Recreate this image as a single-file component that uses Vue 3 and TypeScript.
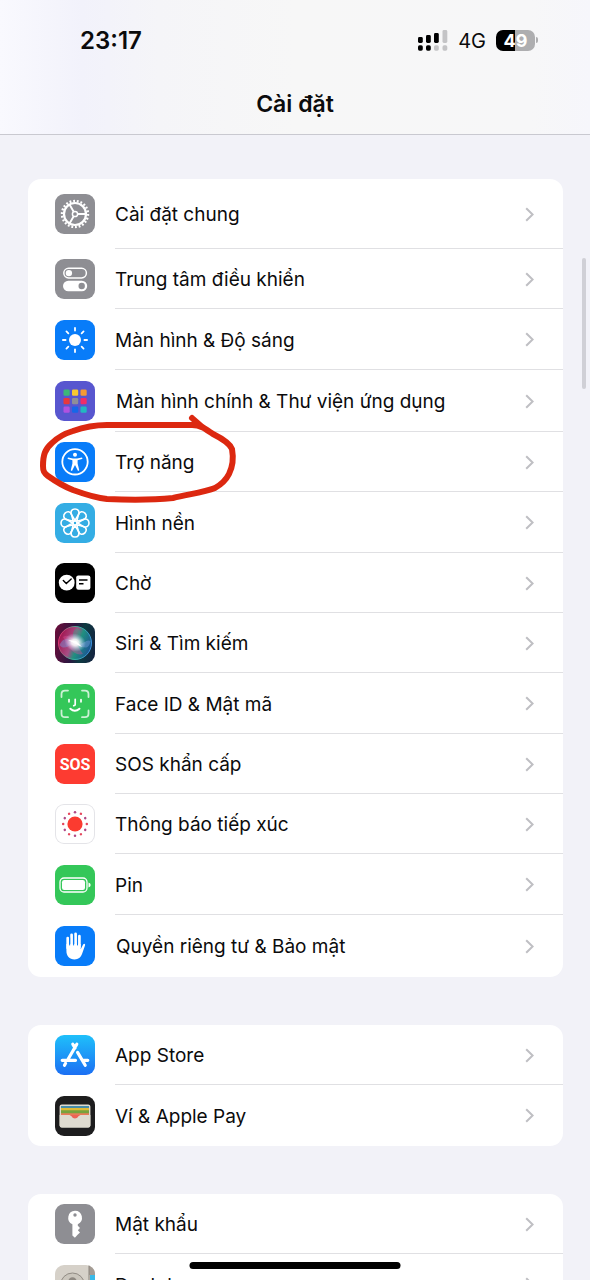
<script setup lang="ts">
interface Row {
  id: string
  label: string
  size?: 'tall' | 'roomy'
  marked?: boolean
}

const groups: Row[][] = [
  [
    { id: 'general', label: 'Cài đặt chung', size: 'tall' },
    { id: 'control', label: 'Trung tâm điều khiển' },
    { id: 'display', label: 'Màn hình & Độ sáng' },
    { id: 'home', label: 'Màn hình chính & Thư viện ứng dụng', size: 'roomy' },
    { id: 'access', label: 'Trợ năng', marked: true },
    { id: 'wallpaper', label: 'Hình nền' },
    { id: 'standby', label: 'Chờ' },
    { id: 'siri', label: 'Siri & Tìm kiếm' },
    { id: 'faceid', label: 'Face ID & Mật mã' },
    { id: 'sos', label: 'SOS khẩn cấp' },
    { id: 'exposure', label: 'Thông báo tiếp xúc' },
    { id: 'battery', label: 'Pin' },
    { id: 'privacy', label: 'Quyền riêng tư & Bảo mật', size: 'roomy' },
  ],
  [
    { id: 'store', label: 'App Store' },
    { id: 'wallet', label: 'Ví & Apple Pay' },
  ],
  [
    { id: 'passwords', label: 'Mật khẩu' },
    { id: 'contacts', label: 'Danh bạ' },
  ],
]

const eighths = [0, 45, 90, 135, 180, 225, 270, 315]
const twelfths = Array.from({ length: 12 }, (_, i) => i * 30)
const tiles = [
  '#3cb878', '#f8c830', '#f59a35',
  '#e8383c', '#8e8e98', '#f02d68',
  '#b052e0', '#1667e8', '#22b8c0',
].map((color, i) => ({ color, x: 8.5 + (i % 3) * 8.5, y: 8.5 + Math.floor(i / 3) * 8.5 }))
</script>

<template>
  <div class="screen">
    <header class="top">
      <div class="status">
        <time class="clock">23:17</time>
        <div class="indicators">
          <svg class="signal" viewBox="0 0 30 21" aria-hidden="true">
            <rect x="0" y="7" width="4.8" height="6" rx="1.4" />
            <rect x="8" y="5" width="4.8" height="8" rx="1.4" />
            <rect x="16" y="3" width="4.8" height="10" rx="1.4" />
            <rect x="24.5" y="0" width="4.8" height="13" rx="1.4" fill="#c4c4c6" />
            <rect x="0" y="15.3" width="4.8" height="5.4" rx="1.6" />
            <rect x="8" y="15.3" width="4.8" height="5.4" rx="1.6" />
            <rect x="16" y="15.3" width="4.8" height="5.4" rx="1.6" fill="#c4c4c6" />
            <rect x="24.5" y="15.3" width="4.8" height="5.4" rx="1.6" fill="#c4c4c6" />
          </svg>
          <span class="network">4G</span>
          <span class="charge"><span class="level">49</span></span>
        </div>
      </div>
      <h1>Cài đặt</h1>
    </header>

    <main class="content">
      <ul v-for="(group, g) in groups" :key="g" class="card">
        <li v-for="row in group" :key="row.id" class="item" :class="row.size">
          <a class="row" :href="'#' + row.id">
            <svg class="icon" :class="row.id" viewBox="0 0 40 40" aria-hidden="true">
              <g v-if="row.id === 'general'" fill="none" stroke="#fff">
                <circle cx="20" cy="20" r="11" stroke-width="2.2" />
                <circle cx="20" cy="20" r="13" stroke-width="2.4" pathLength="44" stroke-dasharray="1 1" />
                <circle cx="20" cy="20" r="2.6" stroke-width="1.5" />
                <path d="M22.6 20H31M18.7 17.7L14.5 10.5M18.7 22.3L14.5 29.5" stroke-width="1.9" />
              </g>
              <g v-else-if="row.id === 'control'">
                <rect x="8.8" y="9.3" width="22.6" height="9.6" rx="4.8" fill="none" stroke="#fff" stroke-width="1.5" />
                <circle cx="13.9" cy="14.1" r="3.2" fill="#fff" />
                <rect x="8" y="21.7" width="24.2" height="10.6" rx="5.3" fill="#fff" />
                <circle cx="26.7" cy="27" r="3.2" fill="#8e8e93" />
              </g>
              <g v-else-if="row.id === 'display'" stroke="#fff" stroke-width="1.8" stroke-linecap="round">
                <circle cx="20" cy="20" r="6" fill="#fff" stroke="none" />
                <path v-for="a in eighths" :key="a" d="M20 10.6V7.9" :transform="`rotate(${a} 20 20)`" />
              </g>
              <g v-else-if="row.id === 'home'">
                <rect v-for="t in tiles" :key="t.color" :x="t.x" :y="t.y" width="6.2" height="6.2" rx="1.3" :fill="t.color" />
              </g>
              <g v-else-if="row.id === 'access'">
                <circle cx="20" cy="19.8" r="12.7" fill="none" stroke="#fff" stroke-width="1.8" />
                <circle cx="20" cy="12.7" r="2" fill="#fff" />
                <path d="M13 15.6L18 16.4H22L27 15.6Q28 16.6 27 17.1L22.6 18.2V21.5L24.2 28Q24 29.2 22.9 28.7L20 23L17.1 28.7Q16 29.2 15.8 28L17.4 21.5V18.2L13 17.1Q12 16.6 13 15.6Z" fill="#fff" />
              </g>
              <g v-else-if="row.id === 'wallpaper'" fill="none" stroke="#fff" stroke-width="1.6" stroke-linejoin="round">
                <path v-for="a in eighths" :key="a" d="M20 17.5L16.8 12.2C14.6 8 17.4 6 20 6S25.4 8 23.2 12.2Z" :transform="`rotate(${a} 20 20)`" />
                <circle cx="20" cy="20" r="2" />
              </g>
              <g v-else-if="row.id === 'standby'">
                <circle cx="11.7" cy="19.7" r="7.9" fill="#fff" />
                <path d="M8.3 17.5L11.3 20.6L16.2 16" fill="none" stroke="#000" stroke-width="1.4" stroke-linecap="round" />
                <rect x="21.2" y="12.4" width="14.2" height="14.4" rx="2.2" fill="#fff" />
                <path d="M24 17H32.5M24 20.7H28.5" stroke="#000" stroke-width="1.5" />
              </g>
              <g v-else-if="row.id === 'siri'">
                <defs>
                  <linearGradient id="siri-ring" x1="0" y1="0.4" x2="1" y2="0.6">
                    <stop offset="0" stop-color="#e0316f" />
                    <stop offset="0.5" stop-color="#34b996" />
                    <stop offset="1" stop-color="#3c8fe0" />
                  </linearGradient>
                  <radialGradient id="siri-core">
                    <stop offset="0" stop-color="#fff" />
                    <stop offset="0.35" stop-color="#fff" stop-opacity="0.85" />
                    <stop offset="1" stop-color="#b9d4ff" stop-opacity="0" />
                  </radialGradient>
                  <linearGradient id="siri-orb" x1="0" y1="0.3" x2="1" y2="0.7">
                    <stop offset="0" stop-color="#a3124d" />
                    <stop offset="0.42" stop-color="#a84d85" />
                    <stop offset="0.6" stop-color="#21907f" />
                    <stop offset="1" stop-color="#1b4f96" />
                  </linearGradient>
                </defs>
                <circle cx="20" cy="20" r="16.5" fill="url(#siri-orb)" stroke="url(#siri-ring)" stroke-width="1" />
                <path d="M4.5 22C9 13 15 16 21 20S31 15 35.5 18C34 27 29 25 22 22S10 29 4.5 22Z" fill="#7798e0" opacity="0.45" />
                <path d="M8 14C16 9 20 19 28 31C18 34 13 22 8 14Z" fill="#dc4f99" opacity="0.4" />
                <path d="M22 5C29 9 24 15 20 20C18 15 16 8 22 5Z" fill="#26b188" opacity="0.4" />
                <ellipse cx="20" cy="19.5" rx="11" ry="9" fill="url(#siri-core)" transform="rotate(18 20 20)" />
                <path d="M13 17L27 24L21 18Z" fill="#fff" />
              </g>
              <g v-else-if="row.id === 'faceid'" fill="none" stroke="#fff" stroke-linecap="round">
                <path d="M6.5 13V10Q6.5 6.6 10 6.6H13M27 6.6H30Q33.5 6.6 33.5 10V13M33.5 26.5V29.8Q33.5 33.2 30 33.2H27M13 33.2H10Q6.5 33.2 6.5 29.8V26.5" stroke-width="1.8" opacity="0.75" />
                <path d="M14 15.5V17.8M26 15.5V17.8M20.2 15.3V20.5Q20.2 21.7 18.7 21.7" stroke-width="1.7" />
                <path d="M15.3 24.7Q19.8 28.7 24.5 24.7" stroke-width="1.9" />
              </g>
              <text v-else-if="row.id === 'sos'" class="sos-text" x="20" y="26" text-anchor="middle">SOS</text>
              <g v-else-if="row.id === 'exposure'">
                <circle cx="20" cy="20" r="7.6" fill="#fb3b30" />
                <circle v-for="a in twelfths" :key="a" cx="20" cy="8.2" r="1.25" :fill="a % 60 ? '#e5465c' : '#b04a86'" :transform="`rotate(${a} 20 20)`" />
              </g>
              <g v-else-if="row.id === 'battery'">
                <rect x="5" y="13" width="27" height="14" rx="4" fill="none" stroke="#fff" stroke-width="1.3" />
                <rect x="7" y="15" width="23" height="10" rx="2.2" fill="#fff" />
                <path d="M33.5 17.6Q35.7 18.2 35.7 20T33.5 22.4Z" fill="#fff" />
              </g>
              <g v-else-if="row.id === 'privacy'" fill="#fff">
                <path d="M12.7 12V22M16.6 8.8V20M20.6 7.8V20M24.4 10.2V21" stroke="#fff" stroke-width="2.7" stroke-linecap="round" />
                <path d="M11.4 18H25.7V23.2L28 18.7C29 17 30.6 17.6 30 19.6L27.2 27.5C25.6 31.6 23.4 33.4 19.6 33.4C14.2 33.4 11.4 30.2 11.4 24.8Z" />
                <path d="M14.65 12V19M18.6 10V19M22.5 10V19" stroke="#087cf9" stroke-width="1" stroke-linecap="round" />
              </g>
              <g v-else-if="row.id === 'store'" stroke="#fff" stroke-width="3.2" stroke-linecap="round">
                <path d="M21.8 9.2L13.2 24M10.6 28.3L9.5 30.3M17.8 9.2L20 13M22.6 17.4L30.2 30.3M7.2 25.3H20.5M28 25.3H32.8" />
              </g>
              <g v-else-if="row.id === 'wallet'">
                <rect x="4.6" y="8.6" width="30.8" height="22.8" rx="2.2" fill="#dedbd0" />
                <path d="M6 10H34V13H6Z" fill="#468daa" />
                <path d="M6 12H34V15H6Z" fill="#dfbb37" />
                <path d="M6 14.2H34V18H6Z" fill="#77a23c" />
                <path d="M6 17.3H34V20H6Z" fill="#e77b58" />
                <path d="M4.6 19H14.5C16 19 16.5 22.6 20 22.6S24 19 25.5 19H35.4V29.2Q35.4 31.4 33.2 31.4H6.8Q4.6 31.4 4.6 29.2Z" fill="#dedbd0" />
                <path d="M15.5 19H24.5C23.5 19.5 23 22.4 20 22.4S16.5 19.5 15.5 19Z" fill="#ed6355" />
              </g>
              <g v-else-if="row.id === 'passwords'">
                <path d="M20 6.8A7 7 0 0 1 22.8 20.2V21.8L25 24L22.8 26.2L25 28.4L22.6 30.8L19.9 33.8L17.4 31.4V20.2A7 7 0 0 1 20 6.8Z" fill="#fff" />
                <circle cx="20" cy="11" r="1.7" fill="#8e8e93" />
              </g>
              <g v-else>
                <path d="M34 0H40V10H34Z" fill="#a49c94" />
                <path d="M35 10H40V21H35Z" fill="#39b9e8" />
                <path d="M35 21H40V31H35Z" fill="#f0a33c" />
                <path d="M34 0V40" stroke="#8b847c" stroke-width="1" />
                <circle cx="17.5" cy="20" r="12" fill="#cbc6bd" stroke="#918b84" stroke-width="1" />
                <circle cx="17.5" cy="16.5" r="4.2" fill="#8f8982" />
                <path d="M9.5 27Q11 22 17.5 22T25.5 27Q17.5 34 9.5 27Z" fill="#8f8982" />
              </g>
            </svg>
            <span class="body">
              <span class="label">{{ row.label }}</span>
              <svg class="chevron" viewBox="0 0 9 15" aria-hidden="true">
                <path d="M1.2 1.2L7.6 7.5L1.2 13.8" fill="none" stroke="#bfbfc3" stroke-width="2" />
              </svg>
            </span>
          </a>
          <svg v-if="row.marked" class="mark" viewBox="0 0 200 92" aria-hidden="true">
            <path d="M154 6C160 12 168 18 175 22C168 17 162 13 154 13L69 13C56 13 46 15 35 19C25 22 19 26 14 31C7 37 5 43 5 54C5 59 6 61 10 64C17 69 25 74 35 78C46 82 58 86 69 87C92 88 115 88 135 86C152 82 167 80 177 76C184 72 188 68 191 62C194 56 196 48 194 37C192 32 185 27 175 22" />
          </svg>
        </li>
      </ul>
    </main>

    <div class="scrollbar"></div>
    <div class="home-bar"></div>
  </div>
</template>

<style>
body {
  margin: 0;
  background: #f2f2f8;
}
</style>

<style scoped>
.screen {
  position: relative;
  display: flex;
  flex-direction: column;
  height: 100vh;
  overflow: hidden;
  background: #f2f2f8;
  color: #0b0b0c;
  font-family: Inter, "Noto Sans", sans-serif;
}

.top {
  flex: none;
  border-bottom: 1px solid #c9c9d0;
  background: linear-gradient(90deg, #f9f9fe 0%, #f2f2fb 14%, #f5f5f8 27%, #f7f7f7 50%, #f7f7f8 90%, #f6f6fb 100%);
}

.status {
  display: flex;
  align-items: center;
  justify-content: space-between;
  height: 80px;
  padding: 0 52px 0 80px;
}

.clock {
  font-size: 24px;
  font-weight: 600;
}

.indicators {
  display: flex;
  align-items: center;
  gap: 10px;
}

.signal {
  width: 30px;
  height: 21px;
}

.network {
  padding-top: 2px;
  font-size: 20px;
}

.charge {
  display: flex;
  align-items: center;
  gap: 1px;
}

.charge::after {
  width: 2px;
  height: 6px;
  border-radius: 0 2px 2px 0;
  background: #aeaeb0;
  content: "";
}

.level {
  width: 39px;
  border-radius: 7px;
  background: linear-gradient(90deg, #000 50%, #aeaeb0 50%);
  color: #fff;
  font-size: 18px;
  font-weight: 700;
  line-height: 21px;
  text-align: center;
}

h1 {
  margin: 0;
  padding: 8px 0 14px;
  font-size: 23px;
  font-weight: 600;
  line-height: 32px;
  text-align: center;
}

.content {
  flex: 1;
  min-height: 0;
  overflow-y: auto;
  padding: 44px 27px 0 28px;
  scrollbar-width: none;
}

.card {
  margin: 0 0 48px;
  padding: 0;
  border-radius: 13px;
  background: #fff;
  list-style: none;
}

.item {
  position: relative;
  display: flex;
  height: 60px;
}

.item:nth-child(3n),
.item:last-child {
  height: 61px;
}

.item.roomy {
  height: 62px;
}

.item.tall {
  height: 70px;
}

.row {
  display: flex;
  flex: 1;
  align-items: center;
  gap: 20px;
  padding-left: 27px;
  color: inherit;
  text-decoration: none;
}

.icon {
  flex: none;
  width: 40px;
  height: 40px;
  border-radius: 9px;
  background: #8e8e93;
}

.icon.display,
.icon.access,
.icon.privacy {
  background: #087cf9;
}

.icon.home {
  background: #5856cf;
}

.icon.wallpaper {
  background: #34ade4;
}

.icon.standby {
  background: #000;
}

.icon.siri {
  background: linear-gradient(100deg, #6e0d3a, #2b1640 45%, #0d3b41 65%, #15203f);
}

.icon.faceid,
.icon.battery {
  background: #34c759;
}

.icon.sos {
  background: #fd3b31;
}

.icon.exposure {
  background: #fff;
  box-shadow: inset 0 0 0 1px #e4e4e8;
}

.icon.store {
  background: linear-gradient(#1fc0fa, #1c6ff3);
}

.icon.wallet {
  background: #1d1d1e;
}

.icon.contacts {
  background: #d6d1c9;
}

.sos-text {
  fill: #fff;
  font-family: Roboto, sans-serif;
  font-size: 16px;
  font-weight: 700;
}

.body {
  display: flex;
  flex: 1;
  align-items: center;
  justify-content: space-between;
  align-self: stretch;
  padding-right: 29px;
  box-shadow: inset 0 -1px #e0e0e3;
}

.item:last-child .body {
  box-shadow: none;
}

.label {
  padding-top: 2px;
  font-size: 19px;
  line-height: 28px;
  white-space: nowrap;
}

.roomy .label {
  padding-left: 1px;
}

.chevron {
  width: 9px;
  height: 15px;
}

.mark {
  position: absolute;
  top: -20px;
  left: 10px;
  z-index: 1;
  width: 200px;
  height: 92px;
  pointer-events: none;
}

.mark path {
  fill: none;
  stroke: #dc2810;
  stroke-width: 6px;
  stroke-linecap: round;
  stroke-linejoin: round;
}

.scrollbar {
  position: absolute;
  top: 258px;
  right: 4px;
  width: 4px;
  height: 131px;
  border-radius: 2px;
  background: #d0d0d6;
}

.home-bar {
  position: absolute;
  bottom: 11px;
  left: 50%;
  width: 211px;
  height: 7px;
  border-radius: 4px;
  background: #000;
  transform: translateX(-50%);
}
</style>
